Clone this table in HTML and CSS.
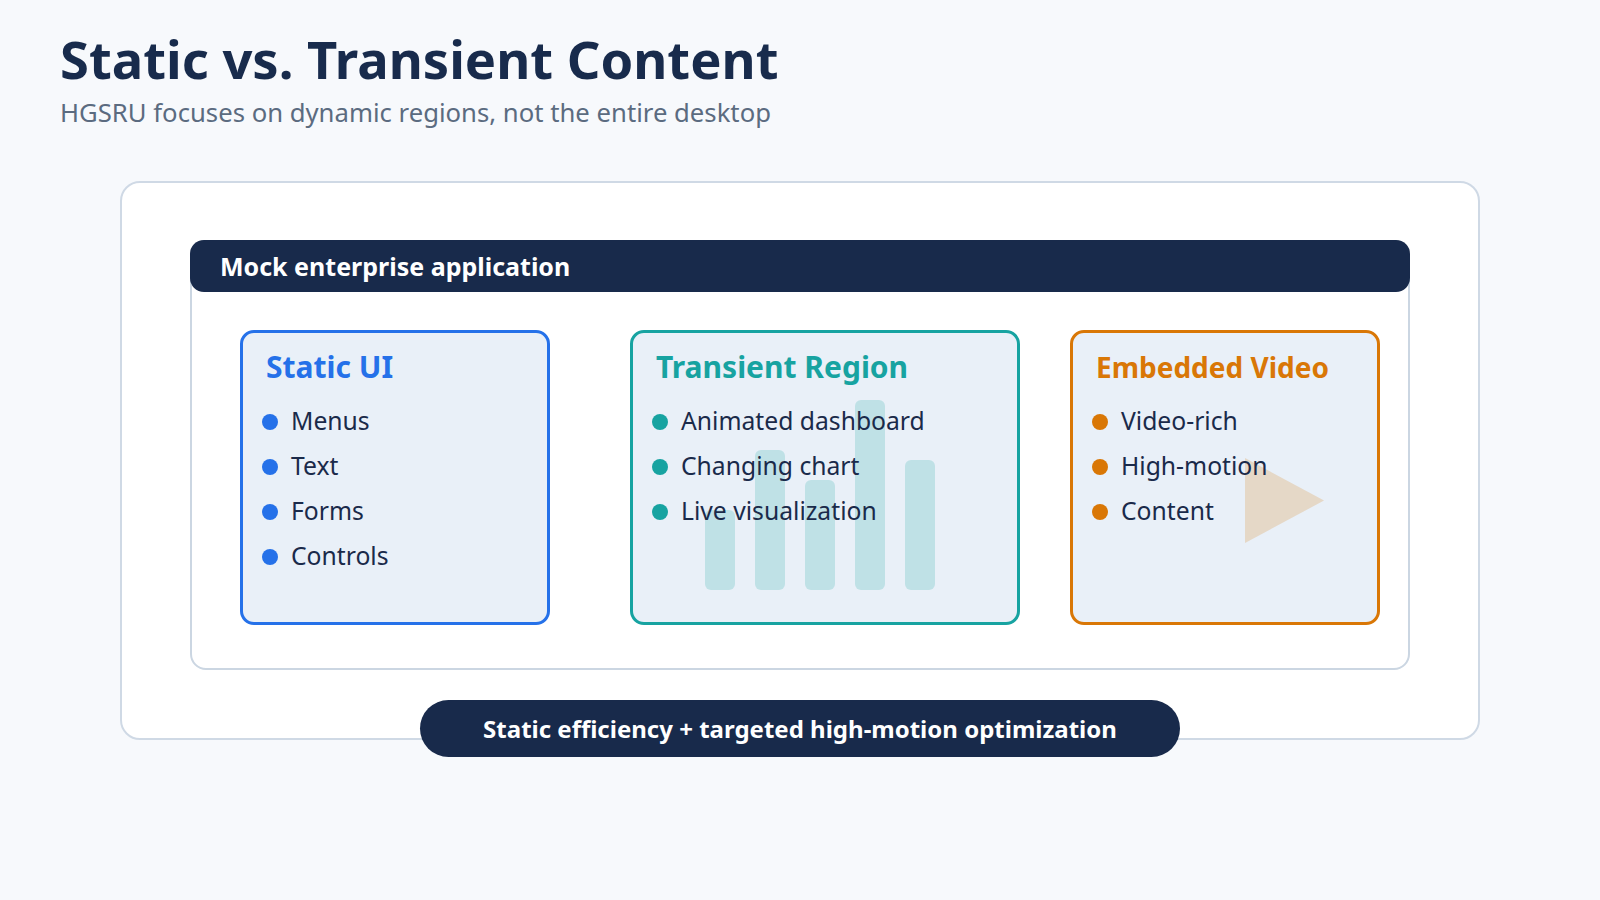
FILE: index.html
```html
<!DOCTYPE html>
<html lang="en">
<head>
<meta charset="utf-8">
<title>Static vs. Transient Content</title>
<link rel="stylesheet" href="styles.css">
</head>
<body>
<div class="page">
  <h1 class="title">Static vs. Transient Content</h1>
  <p class="subtitle">HGSRU focuses on dynamic regions, not the entire desktop</p>

  <div class="stage">
    <div class="window">
      <div class="window-bar">Mock enterprise application</div>
      <div class="regions">
        <div class="region region-static">
          <h3 class="region-title">Static UI</h3>
          <ul class="items">
            <li><span class="dot"></span>Menus</li>
            <li><span class="dot"></span>Text</li>
            <li><span class="dot"></span>Forms</li>
            <li><span class="dot"></span>Controls</li>
          </ul>
        </div>

        <div class="region region-transient">
          <div class="bars">
            <span class="bar" style="height:80px"></span>
            <span class="bar" style="height:140px"></span>
            <span class="bar" style="height:110px"></span>
            <span class="bar" style="height:190px"></span>
            <span class="bar" style="height:130px"></span>
          </div>
          <h3 class="region-title">Transient Region</h3>
          <ul class="items">
            <li><span class="dot"></span>Animated dashboard</li>
            <li><span class="dot"></span>Changing chart</li>
            <li><span class="dot"></span>Live visualization</li>
          </ul>
        </div>

        <div class="region region-video">
          <svg class="play" width="80" height="86" viewBox="0 0 80 86" aria-hidden="true">
            <polygon points="0,0 0,85 79,42.5" fill="#d97706" fill-opacity="0.2"/>
          </svg>
          <h3 class="region-title region-title-sm">Embedded Video</h3>
          <ul class="items">
            <li><span class="dot"></span>Video-rich</li>
            <li><span class="dot"></span>High-motion</li>
            <li><span class="dot"></span>Content</li>
          </ul>
        </div>
      </div>
    </div>
  </div>

  <div class="pill">Static efficiency + targeted high-motion optimization</div>
</div>
</body>
</html>
```

FILE: styles.css
```css
* {
  box-sizing: border-box;
}

html, body {
  margin: 0;
  padding: 0;
}

body {
  background: #f7f9fc;
  font-family: "Noto Sans", "Open Sans", "DejaVu Sans", sans-serif;
  color: #1a2a4a;
  width: 1600px;
  height: 900px;
  overflow: hidden;
}

.page {
  padding: 27px 60px 0 60px;
}

.title {
  margin: 0;
  font-size: 52.5px;
  line-height: 64px;
  font-weight: 700;
  color: #182b4c;
}

.subtitle {
  margin: 6px 0 0 0;
  font-size: 25.7px;
  line-height: 32px;
  color: #5b6b80;
}

.stage {
  margin: 52px 0 0 60px;
  width: 1360px;
  height: 559px;
  background: #ffffff;
  border: 2px solid #cfd9e5;
  border-radius: 20px;
  padding: 57px 0 0 68px;
}

.window {
  width: 1220px;
  height: 430px;
  border: 2px solid #cbd6e2;
  border-radius: 16px;
}

.window-bar {
  margin: -2px -2px 0 -2px;
  height: 52px;
  background: #182a4b;
  border-radius: 14px;
  color: #ffffff;
  font-weight: 700;
  font-size: 25px;
  display: flex;
  align-items: center;
  padding-left: 30px;
}

.regions {
  display: flex;
  margin-top: 38px;
  padding-left: 48px;
}

.region {
  position: relative;
  height: 295px;
  border: 3px solid;
  border-radius: 14px;
  background: #e9f0f8;
  padding: 16px 0 0 19px;
}

.region-static {
  width: 310px;
  border-color: #2571e9;
  --accent: #2571e9;
}

.region-transient {
  width: 390px;
  margin-left: 80px;
  border-color: #17a3a1;
  --accent: #17a3a1;
}

.region-video {
  width: 310px;
  margin-left: 50px;
  border-color: #d97706;
  --accent: #d97706;
}

.region-title {
  position: relative;
  margin: 0;
  padding-left: 4px;
  font-size: 30px;
  line-height: 36px;
  font-weight: 700;
  color: var(--accent);
}

.region-title-sm {
  font-size: 28px;
}

.items {
  position: relative;
  list-style: none;
  margin: 13px 0 0 0;
  padding: 0;
}

.items li {
  display: flex;
  align-items: center;
  height: 45px;
  font-size: 24.7px;
  line-height: 45px;
  color: #1a2a4a;
}

.dot {
  flex: none;
  width: 16px;
  height: 16px;
  border-radius: 50%;
  background: var(--accent);
  margin-right: 13px;
  margin-top: 2px;
}

.bars {
  position: absolute;
  left: 72px;
  bottom: 32px;
  display: flex;
  align-items: flex-end;
  gap: 20px;
}

.bar {
  display: block;
  width: 30px;
  border-radius: 6px;
  background: rgba(23, 163, 161, 0.2);
}

.play {
  position: absolute;
  left: 172px;
  top: 125px;
}

.pill {
  position: relative;
  width: 760px;
  height: 57px;
  margin: -40px auto 0 auto;
  background: #182a4b;
  border-radius: 29px;
  color: #ffffff;
  font-weight: 700;
  font-size: 24px;
  display: flex;
  align-items: center;
  justify-content: center;
}
```
